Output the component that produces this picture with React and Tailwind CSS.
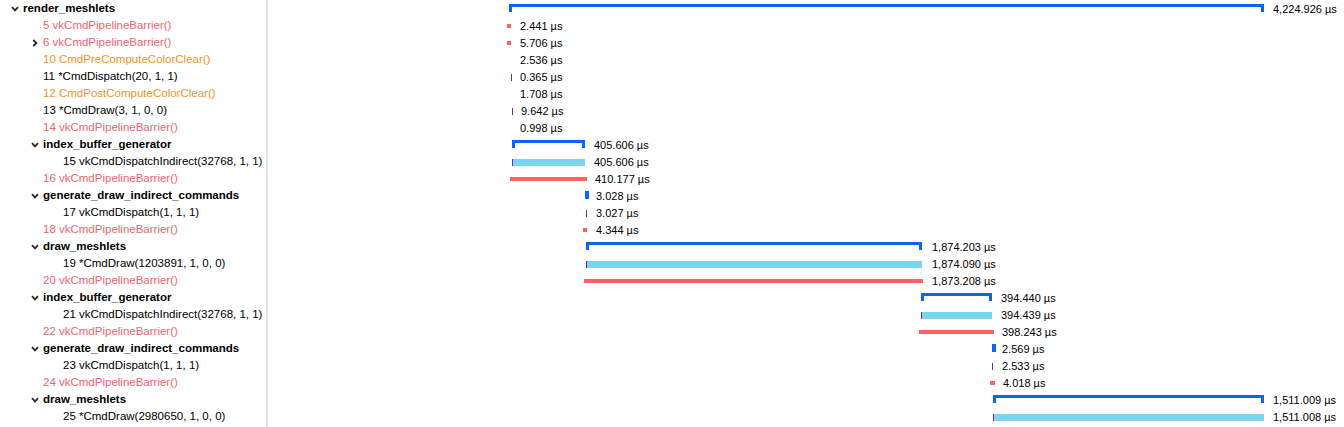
import React from 'react';

const RED = 'text-[#f0646e]';
const ORANGE = 'text-[#f39226]';
const BLACK = 'text-[#000]';

// tree rows: level, chevron, label, colour, bold
const rows = [
  { lvl: 0, chev: 'down', text: 'render_meshlets', bold: true },
  { lvl: 1, text: '5 vkCmdPipelineBarrier()', color: RED },
  { lvl: 1, chev: 'right', text: '6 vkCmdPipelineBarrier()', color: RED },
  { lvl: 1, text: '10 CmdPreComputeColorClear()', color: ORANGE },
  { lvl: 1, text: '11 *CmdDispatch(20, 1, 1)' },
  { lvl: 1, text: '12 CmdPostComputeColorClear()', color: ORANGE },
  { lvl: 1, text: '13 *CmdDraw(3, 1, 0, 0)' },
  { lvl: 1, text: '14 vkCmdPipelineBarrier()', color: RED },
  { lvl: 1, chev: 'down', text: 'index_buffer_generator', bold: true },
  { lvl: 2, text: '15 vkCmdDispatchIndirect(32768, 1, 1)' },
  { lvl: 1, text: '16 vkCmdPipelineBarrier()', color: RED },
  { lvl: 1, chev: 'down', text: 'generate_draw_indirect_commands', bold: true },
  { lvl: 2, text: '17 vkCmdDispatch(1, 1, 1)' },
  { lvl: 1, text: '18 vkCmdPipelineBarrier()', color: RED },
  { lvl: 1, chev: 'down', text: 'draw_meshlets', bold: true },
  { lvl: 2, text: '19 *CmdDraw(1203891, 1, 0, 0)' },
  { lvl: 1, text: '20 vkCmdPipelineBarrier()', color: RED },
  { lvl: 1, chev: 'down', text: 'index_buffer_generator', bold: true },
  { lvl: 2, text: '21 vkCmdDispatchIndirect(32768, 1, 1)' },
  { lvl: 1, text: '22 vkCmdPipelineBarrier()', color: RED },
  { lvl: 1, chev: 'down', text: 'generate_draw_indirect_commands', bold: true },
  { lvl: 2, text: '23 vkCmdDispatch(1, 1, 1)' },
  { lvl: 1, text: '24 vkCmdPipelineBarrier()', color: RED },
  { lvl: 1, chev: 'down', text: 'draw_meshlets', bold: true },
  { lvl: 2, text: '25 *CmdDraw(2980650, 1, 0, 0)' },
];

// timeline: kind, x0, x1 (page coords), label, label x
const bars = [
  { k: 'bracket', x0: 509, x1: 1264, t: '4,224.926 µs', lx: 1273 },
  { k: 'red', x0: 507, x1: 511, t: '2.441 µs', lx: 520 },
  { k: 'red', x0: 507, x1: 511, t: '5.706 µs', lx: 520 },
  { k: null, t: '2.536 µs', lx: 520 },
  { k: 'tick', x0: 511, t: '0.365 µs', lx: 520 },
  { k: null, t: '1.708 µs', lx: 520 },
  { k: 'tick', x0: 512, t: '9.642 µs', lx: 521 },
  { k: null, t: '0.998 µs', lx: 520 },
  { k: 'bracket', x0: 512, x1: 585, t: '405.606 µs', lx: 594 },
  { k: 'cyan', x0: 512, x1: 585, t: '405.606 µs', lx: 594 },
  { k: 'red', x0: 510, x1: 587, t: '410.177 µs', lx: 595 },
  { k: 'bracket', x0: 585, x1: 589, t: '3.028 µs', lx: 596 },
  { k: 'tick', x0: 586, t: '3.027 µs', lx: 596 },
  { k: 'red', x0: 583, x1: 587, t: '4.344 µs', lx: 596 },
  { k: 'bracket', x0: 586, x1: 922, t: '1,874.203 µs', lx: 932 },
  { k: 'cyan', x0: 586, x1: 922, t: '1,874.090 µs', lx: 932 },
  { k: 'red', x0: 584, x1: 923, t: '1,873.208 µs', lx: 932 },
  { k: 'bracket', x0: 921, x1: 992, t: '394.440 µs', lx: 1001 },
  { k: 'cyan', x0: 921, x1: 992, t: '394.439 µs', lx: 1001 },
  { k: 'red', x0: 919, x1: 994, t: '398.243 µs', lx: 1002 },
  { k: 'bracket', x0: 992, x1: 996, t: '2.569 µs', lx: 1002 },
  { k: 'tick', x0: 992, t: '2.533 µs', lx: 1002 },
  { k: 'red', x0: 990, x1: 995, t: '4.018 µs', lx: 1003 },
  { k: 'bracket', x0: 993, x1: 1264, t: '1,511.009 µs', lx: 1273 },
  { k: 'cyan', x0: 993, x1: 1264, t: '1,511.008 µs', lx: 1273 },
];

const OFF = 268; // where the timeline pane starts

const indent = ['pl-[6px]', 'pl-[26px]', 'pl-[46px]'];

function Chevron({ dir }) {
  if (!dir) return <span className="w-[17px] shrink-0" />;
  return (
    <span className="w-[17px] shrink-0 flex items-center justify-center">
      {dir === 'down' ? (
        <svg width="8" height="6" viewBox="0 0 8 6">
          <path d="M1 1.2 L4 4.4 L7 1.2" fill="none" stroke="#2a2a2a" strokeWidth="1.8" />
        </svg>
      ) : (
        <svg width="6" height="8" viewBox="0 0 6 8">
          <path d="M1.2 1 L4.4 4 L1.2 7" fill="none" stroke="#2a2a2a" strokeWidth="1.8" />
        </svg>
      )}
    </span>
  );
}

function Bar({ b }) {
  const left = b.x0 - OFF;
  const w = b.x1 - b.x0;
  if (b.k === 'bracket') {
    return (
      <div className="absolute top-[4px] h-[8px]" style={{ left, width: w }}>
        <div className="absolute left-0 right-0 top-0 h-[3px] bg-[#0a64f5]" />
        <div className="absolute left-0 top-0 w-[3px] h-[8px] bg-[#0a64f5]" />
        <div className="absolute right-0 top-0 w-[3px] h-[8px] bg-[#0a64f5]" />
      </div>
    );
  }
  if (b.k === 'cyan') {
    return (
      <div className="absolute top-[6px] h-[7px] bg-[#7ad5f0] flex" style={{ left, width: w }}>
        <div className="w-[1px] h-full bg-[#8a1f9e]" />
      </div>
    );
  }
  if (b.k === 'red') {
    return <div className="absolute top-[7px] h-[4px] bg-[#ff6060]" style={{ left, width: w }} />;
  }
  if (b.k === 'tick') {
    return <div className="absolute top-[6px] h-[7px] w-[1px] bg-[#8a1f9e]" style={{ left }} />;
  }
  return null;
}

export default function App() {
  return (
    <div className="flex w-[1344px] h-[427px] bg-white overflow-hidden text-[11.5px] leading-none font-['Liberation_Sans',Arial,sans-serif]">
      <div className="w-[266px] shrink-0 flex flex-col">
        {rows.map((r, i) => (
          <div key={i} className={`h-[17px] pt-[1px] flex items-center whitespace-nowrap ${indent[r.lvl]}`}>
            <Chevron dir={r.chev} />
            <span className={`${r.color || BLACK} ${r.bold ? 'font-bold' : ''}`}>{r.text}</span>
          </div>
        ))}
      </div>
      <div className="w-[2px] shrink-0 bg-[#e3e3e3]" />
      <div className="flex-1 flex flex-col">
        {bars.map((b, i) => (
          <div key={i} className="relative h-[17px]">
            <Bar b={b} />
            <span
              className="absolute top-0 h-[17px] pt-[1px] flex items-center whitespace-nowrap text-[11px] text-[#000]"
              style={{ left: b.lx - OFF }}
            >
              {b.t}
            </span>
          </div>
        ))}
      </div>
    </div>
  );
}
